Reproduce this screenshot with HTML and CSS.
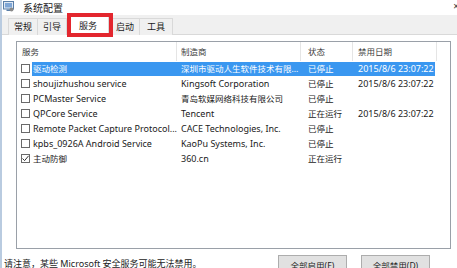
FILE: index.html
```html
<!DOCTYPE html>
<html lang="zh-CN">
<head>
    <meta charset="UTF-8">
    <title>系统配置</title>
    <link rel="stylesheet" href="styles.css">
</head>
<body>
    <div class="window">
        <div class="titlebar">
            <svg class="app-icon" width="11" height="11" viewBox="0 0 11 11">
                <rect x="0.5" y="0.5" width="10" height="7.5" fill="#dfe8f3" stroke="#5b7fa8"/>
                <rect x="2" y="2" width="7" height="4.5" fill="#7fa6d6"/>
                <rect x="3.5" y="8.5" width="4" height="1.5" fill="#5b7fa8"/>
                <circle cx="8.5" cy="8.5" r="2" fill="#8a8a8a"/>
            </svg>
            <span class="title">系统配置</span>
            <span class="close">×</span>
        </div>

        <div class="tabs">
            <div class="tab">常规</div>
            <div class="tab">引导</div>
            <div class="tab active">服务<span class="mark"></span></div>
            <div class="tab after">启动</div>
            <div class="tab last">工具</div>
        </div>

        <div class="panel">
            <div class="list">
                <div class="head">
                    <div class="hcell c1">服务</div>
                    <div class="hcell c2">制造商</div>
                    <div class="hcell c3">状态</div>
                    <div class="hcell c4">禁用日期</div>
                </div>

                <div class="row selected">
                    <span class="box"></span>
                    <div class="cells">
                        <span class="cell name zh">驱动检测</span>
                        <span class="cell maker zh">深圳市驱动人生软件技术有限...</span>
                        <span class="cell state zh">已停止</span>
                        <span class="cell date">2015/8/6 23:07:22</span>
                    </div>
                </div>
                <div class="row">
                    <span class="box"></span>
                    <div class="cells">
                        <span class="cell name">shoujizhushou service</span>
                        <span class="cell maker">Kingsoft Corporation</span>
                        <span class="cell state zh">已停止</span>
                        <span class="cell date">2015/8/6 23:07:22</span>
                    </div>
                </div>
                <div class="row">
                    <span class="box"></span>
                    <div class="cells">
                        <span class="cell name">PCMaster Service</span>
                        <span class="cell maker zh">青岛软媒网络科技有限公司</span>
                        <span class="cell state zh">已停止</span>
                        <span class="cell date"></span>
                    </div>
                </div>
                <div class="row">
                    <span class="box"></span>
                    <div class="cells">
                        <span class="cell name">QPCore Service</span>
                        <span class="cell maker">Tencent</span>
                        <span class="cell state zh">正在运行</span>
                        <span class="cell date">2015/8/6 23:07:22</span>
                    </div>
                </div>
                <div class="row">
                    <span class="box"></span>
                    <div class="cells">
                        <span class="cell name">Remote Packet Capture Protocol...</span>
                        <span class="cell maker">CACE Technologies, Inc.</span>
                        <span class="cell state zh">已停止</span>
                        <span class="cell date"></span>
                    </div>
                </div>
                <div class="row">
                    <span class="box"></span>
                    <div class="cells">
                        <span class="cell name">kpbs_0926A Android Service</span>
                        <span class="cell maker">KaoPu Systems, Inc.</span>
                        <span class="cell state zh">已停止</span>
                        <span class="cell date"></span>
                    </div>
                </div>
                <div class="row">
                    <span class="box checked">
                        <svg width="9" height="9" viewBox="0 0 9 9"><path d="M1.5 4.5 L3.6 6.6 L7.6 1.8" fill="none" stroke="#333" stroke-width="1"/></svg>
                    </span>
                    <div class="cells">
                        <span class="cell name zh">主动防御</span>
                        <span class="cell maker">360.cn</span>
                        <span class="cell state zh">正在运行</span>
                        <span class="cell date"></span>
                    </div>
                </div>
            </div>

            <div class="footer">
                <span class="note">请注意，某些 Microsoft 安全服务可能无法禁用。</span>
                <button class="btn">全部启用(E)</button>
                <button class="btn">全部禁用(D)</button>
            </div>
        </div>
    </div>
</body>
</html>
```

FILE: styles.css
```css
body {
    margin: 0;
    padding: 0;
    width: 457px;
    height: 268px;
    overflow: hidden;
    font-family: "Noto Sans", "Noto Sans CJK SC", sans-serif;
    font-size: 9px;
    color: #1a1a1a;
    background-color: #fff;
}
.zh {
    font-size: 8.5px;
}
.window {
    height: 268px;
    border-left: 2px solid #b9cbe0;
    box-sizing: border-box;
    display: flex;
    flex-direction: column;
}
.titlebar {
    height: 17px;
    display: flex;
    align-items: center;
    padding-left: 1px;
    background-color: #fff;
}
.app-icon {
    display: block;
    margin-top: -2px;
}
.title {
    margin-left: 9px;
    font-size: 10px;
    color: #222;
}
.close {
    margin-left: auto;
    margin-right: -2px;
    font-size: 10px;
    color: #333;
    margin-top: -4px;
}
.tabs {
    height: 23px;
    display: flex;
    align-items: flex-end;
    padding-left: 6px;
    background-color: #f0f0f0;
    border-bottom: 1px solid #d9d9d9;
}
.tab {
    position: relative;
    height: 16px;
    line-height: 16px;
    padding: 0 5px;
    margin-bottom: -1px;
    margin-right: -1px;
    border: 1px solid #d9d9d9;
    border-bottom: none;
    white-space: nowrap;
    background-color: #f0f0f0;
}
.tab.active {
    height: 19px;
    line-height: 19px;
    padding: 0 11px 0 10px;
    margin-left: 2px;
    background-color: #fff;
    z-index: 1;
}
.tab.after {
    margin-left: 2px;
}
.tab.last {
    padding: 0 7px;
}
.mark {
    position: absolute;
    left: -2px;
    top: -3px;
    width: 38px;
    height: 16px;
    border: 4px solid #e3262e;
}
.panel {
    flex: 1;
    background-color: #fff;
    padding: 6px 0 0 5px;
}
.list {
    margin-left: 9px;
    width: 435px;
    height: 208px;
    border: 1px solid #9aa0a8;
    box-sizing: border-box;
}
.head {
    display: flex;
    height: 19px;
    line-height: 20px;
}
.hcell {
    box-sizing: border-box;
    border-right: 1px solid #e5e5e5;
    color: #3c3c3c;
    font-size: 8.5px;
}
.hcell.c1 { width: 160px; padding-left: 5px; }
.hcell.c2 { width: 124px; padding-left: 4px; }
.hcell.c3 { width: 52px; padding-left: 7px; }
.hcell.c4 { width: 84px; padding-left: 5px; }
.row {
    display: flex;
    align-items: center;
    height: 15px;
}
.box {
    width: 9px;
    height: 9px;
    margin-left: 4px;
    margin-right: 2px;
    border: 1px solid #6a6a6a;
    box-sizing: border-box;
    position: relative;
}
.box svg {
    position: absolute;
    left: -1px;
    top: -1px;
}
.cells {
    display: flex;
    height: 14px;
    line-height: 14px;
    width: 403px;
}
.row.selected .cells {
    background-color: #3a97f0;
    color: #fff;
}
.cell {
    box-sizing: border-box;
    white-space: nowrap;
    overflow: hidden;
}
.name { width: 145px; padding-left: 1px; }
.maker { width: 124px; padding-left: 4px; }
.state { width: 52px; padding-left: 7px; }
.date { width: 82px; padding-left: 5px; }
.footer {
    display: flex;
    align-items: flex-start;
    margin-top: 5px;
    margin-left: -3px;
}
.note {
    margin-top: 3px;
    width: 274px;
    white-space: nowrap;
    color: #222;
}
.btn {
    width: 69px;
    height: 20px;
    margin-top: 1px;
    margin-right: 14px;
    padding: 0;
    font-family: "Noto Sans", "Noto Sans CJK SC", sans-serif;
    font-size: 8.5px;
    color: #222;
    background-color: #e1e1e1;
    border: 1px solid #adadad;
}
```
